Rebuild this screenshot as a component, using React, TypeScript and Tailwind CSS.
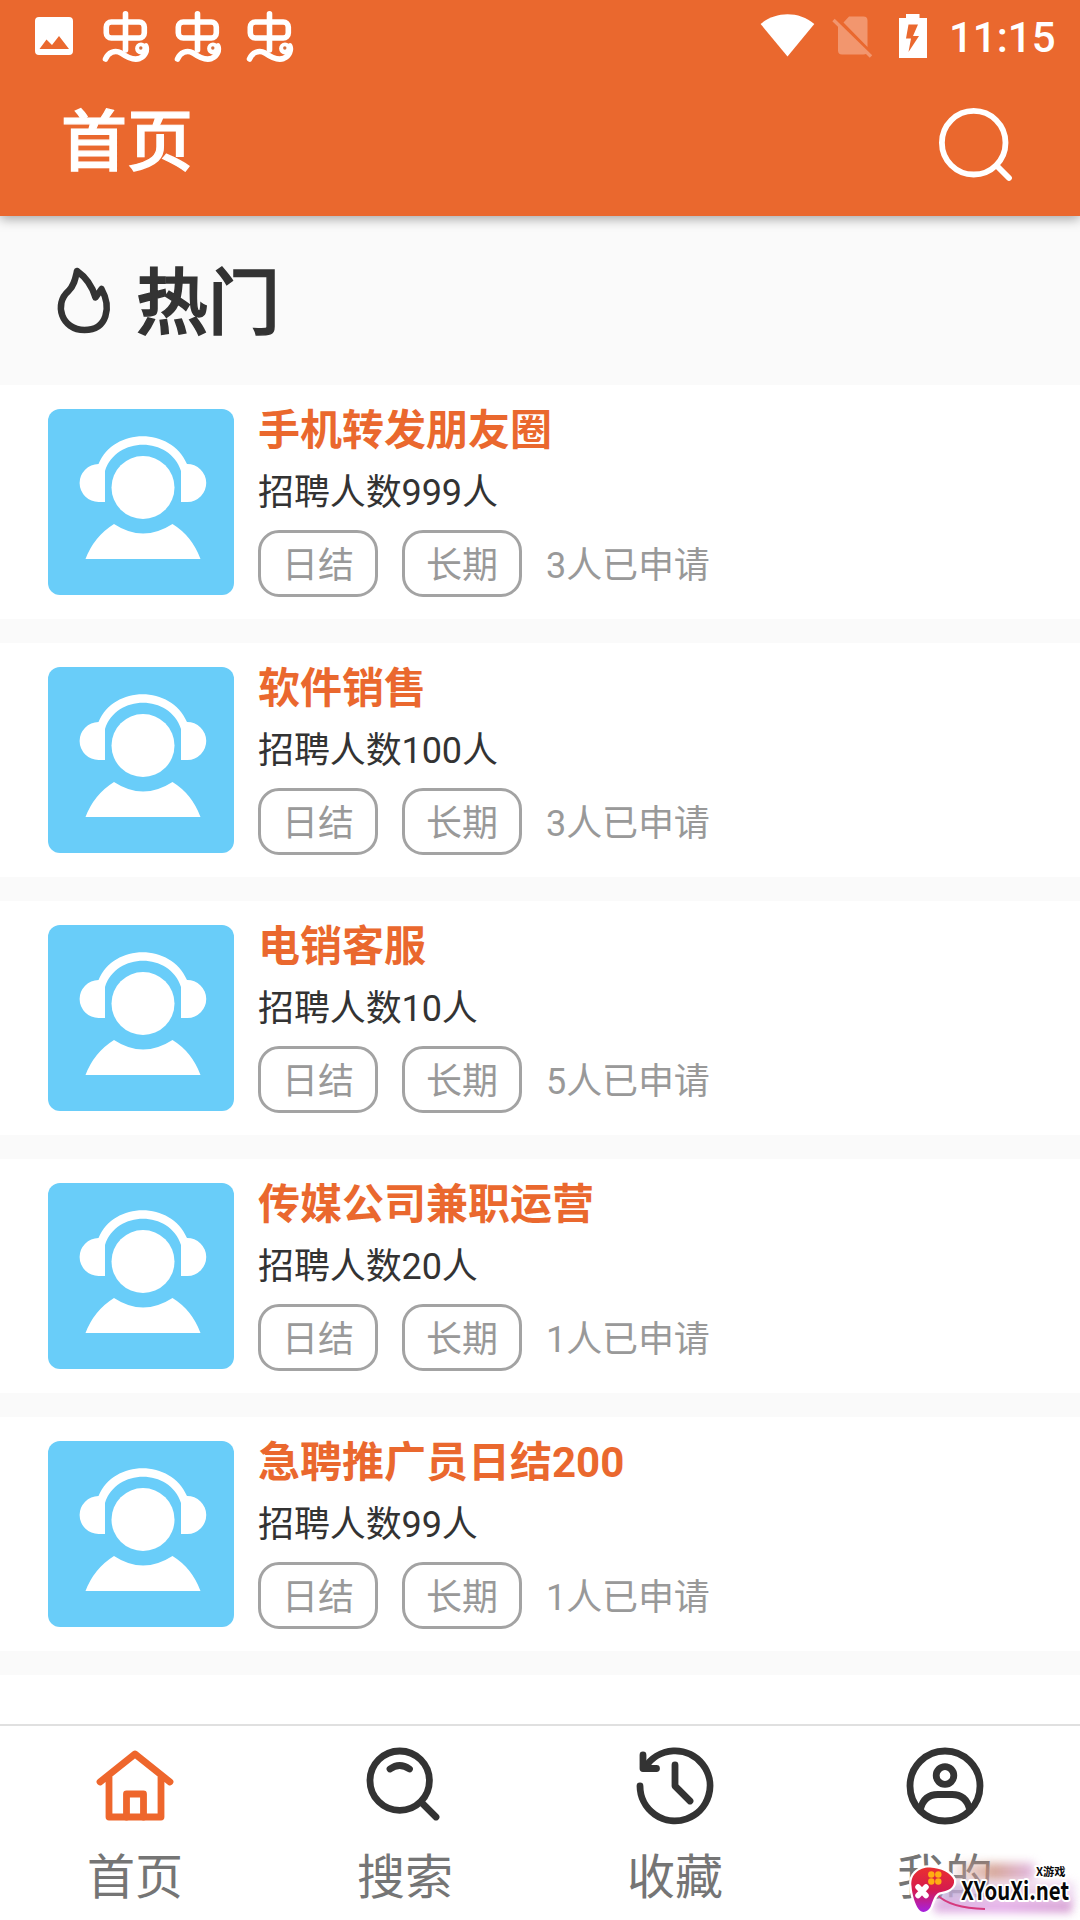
import React from "react";

const jobs = [
  { title: "手机转发朋友圈", count: 999, applied: 3 },
  { title: "软件销售", count: 100, applied: 3 },
  { title: "电销客服", count: 10, applied: 5 },
  { title: "传媒公司兼职运营", count: 20, applied: 1 },
  { title: "急聘推广员日结200", count: 99, applied: 1 },
];

function WormIcon() {
  return (
    <svg className="h-[72px] w-[72px] shrink-0" viewBox="0 0 72 72" fill="none" stroke="#fff" strokeWidth="5.6" strokeLinecap="round" strokeLinejoin="round">
      <rect x="16.3" y="22" width="38" height="16" rx="5" />
      <path d="M35.500 13.800V50" />
      <path d="M15.500 59C18 52.500 25 49.500 31 53C38 58 44 60.500 49.500 58.500C55.500 56 57.500 50 55.800 46" />
      <circle cx="51" cy="48.500" r="4.600" fill="#fff" strokeWidth="2.600" />
      <circle cx="50.800" cy="48" r="1.700" fill="#d4703f" stroke="none" />
    </svg>
  );
}

function StatusBar() {
  return (
    <div className="flex h-[72px] justify-between">
      <div className="flex pl-[18px]">
        <svg className="h-[72px] w-[72px] shrink-0" viewBox="18 0 72 72">
          <path fill="#fff" fillRule="evenodd" d="M39 17H69a4 4 0 0 1 4 4V51a4 4 0 0 1-4 4H39a4 4 0 0 1-4-4V21a4 4 0 0 1 4-4ZM39.500 49H69L59 36L52 45L46.500 39.500Z" />
        </svg>
        <WormIcon />
        <WormIcon />
        <WormIcon />
      </div>
      <div className="flex">
        <svg className="h-[72px] w-[180px]" viewBox="755 0 180 72">
          <path fill="#fff" d="M760.600 24C776 11 799 11 814.300 24L787.500 56.500Z" />
          <path fill="#f2966e" d="M849 16.500H863.500Q867.500 16.500 867.500 20.500V47L843.500 22.500ZM838 24.500L866.500 53.500Q865.500 54.500 863.500 54.500H842Q838 54.500 838 50.500Z" />
          <path stroke="#f2966e" strokeWidth="3.400" d="M833.500 20L871 56.500" />
          <path fill="#fff" fillRule="evenodd" d="M906 14H919.500V18H927V58H899V18H906ZM908.500 24.500L906 38.500H911L908.500 52L919 36H913L918 24.500Z" />
        </svg>
        <span className="w-[145px] pl-[14px] font-[Roboto] text-[42px] font-medium leading-[75px] text-white">11:15</span>
      </div>
    </div>
  );
}

function Avatar() {
  return (
    <svg className="h-[186px] w-[186px] shrink-0" viewBox="48 409 186 186">
      <rect x="48" y="409" width="186" height="186" rx="12" fill="#69cdf9" />
      <g fill="#fff">
        <circle cx="143" cy="487.500" r="31.500" />
        <path d="M85.500 559Q94 536.500 114 524Q143 543 172.500 524Q192 536 200.500 559Z" />
        <path d="M98.500 464C114 427 171 427 187 464A19 19 0 0 1 187.500 502H181V471C170 436 116 436 105 471V502H98.700A19 19 0 0 1 98.500 464Z" />
      </g>
    </svg>
  );
}

function Tag({ children }: { children: React.ReactNode }) {
  return (
    <span className="flex h-[67px] w-[120px] items-center justify-center rounded-[21px] border-[3px] border-[#a3a3a3] pt-[5px] text-[36px] leading-none text-[#999]">
      {children}
    </span>
  );
}

function JobCard({ title, count, applied }: { title: string; count: number; applied: number }) {
  return (
    <article className="flex h-[234px] gap-6 bg-white pl-12 pt-6">
      <Avatar />
      <div>
        <h2 className="h-[56px] pt-px text-[42px] font-bold leading-[42px] text-[#ea682e]">{title}</h2>
        <p className="h-[65px] pt-px text-[36px] leading-[54px] tracking-[-0.12px] text-[#333]">招聘人数{count}人</p>
        <div className="flex items-center gap-6">
          <Tag>日结</Tag>
          <Tag>长期</Tag>
          <span className="pt-[5px] text-[36px] leading-none tracking-[-0.1px] text-[#999]">{applied}人已申请</span>
        </div>
      </div>
    </article>
  );
}

const navItems = [
  {
    label: "首页",
    color: "text-[#ee662c]",
    icon: (
      <>
        <path d="M6 38L41 10L76 38M15 33V73H67V33" />
        <path d="M32.500 73V50H49.500V73" />
      </>
    ),
  },
  {
    label: "搜索",
    color: "text-[#333]",
    icon: (
      <>
        <circle cx="35.700" cy="36.700" r="29.700" />
        <path d="M58 59L72 73M26 25Q35.500 18 45.500 25" />
      </>
    ),
  },
  {
    label: "收藏",
    color: "text-[#333]",
    icon: (
      <>
        <path d="M6 42A35 35 0 1 0 11.500 23" />
        <path d="M9 11V24.500H22.500M41 21V42L56 57" />
      </>
    ),
  },
  {
    label: "我的",
    color: "text-[#333]",
    icon: (
      <>
        <circle cx="41" cy="42" r="35" />
        <circle cx="41" cy="31.500" r="8.800" />
        <path d="M16.500 65Q20 50.500 34 50.500H48Q62 50.500 65.500 65" />
      </>
    ),
  },
];

function Watermark() {
  return (
    <div className="absolute bottom-0 right-0 h-[72px] w-[176px] overflow-hidden">
      <div className="absolute left-[50px] top-[15px] h-[18px] w-[80px] bg-linear-to-r from-[#e3b9b4]/40 via-[#c98a78] to-[#d9a0d8] opacity-75 blur-[5px]" />
      <div className="absolute left-[36px] top-[34px] h-[22px] w-[134px] bg-linear-to-r from-[#b9a6d6] via-[#e8c3dc] to-[#e9cfee] opacity-80 blur-[5px]" />
      <div className="absolute left-[30px] top-[52px] h-[13px] w-[138px] bg-linear-to-r from-[#d9a3dc] via-[#e0a0e6] to-[#cf8fcb] opacity-80 blur-[4px]" />
      <svg className="absolute inset-0 h-[72px] w-[176px]" viewBox="904 1848 176 72">
        <defs>
          <linearGradient id="pad" x1="0" y1="0" x2="0" y2="1">
            <stop offset="0" stopColor="#ea2f30" />
            <stop offset=".5" stopColor="#d51b4e" />
            <stop offset="1" stopColor="#a621e0" />
          </linearGradient>
        </defs>
        <path d="M936.700 1894.500Q950 1908 985 1909" fill="none" stroke="#d53a7e" strokeWidth="1.800" />
        <path d="M911.500 1886C910 1874 920 1867 930 1867.500C941 1868 951 1873 954 1880C955 1888 948 1891 939 1892.500C934 1895 933 1901 930.500 1907C928 1912 922 1914 918.500 1909C915 1904 912 1894 911.500 1886Z" fill="url(#pad)" stroke="#fff" strokeWidth="4.500" paintOrder="stroke" />
        <path d="M918 1887L926 1895.500M926 1887L918 1895.500" stroke="#fff" strokeWidth="5.500" strokeLinecap="round" />
        <g fill="#ffae12">
          <circle cx="931.300" cy="1874.500" r="3.200" />
          <circle cx="938.300" cy="1874.500" r="3.200" />
          <circle cx="931.300" cy="1881.500" r="3.200" />
          <circle cx="938.300" cy="1881.500" r="3.200" />
        </g>
        <g fill="#080808" stroke="#fff" strokeWidth="4" paintOrder="stroke" strokeLinejoin="round">
          <text x="1036" y="1876" fontSize="11" fontWeight="700" textLength="29.500" lengthAdjust="spacingAndGlyphs" fontFamily="Noto Sans CJK SC">X游戏</text>
          <text x="961" y="1900" fontSize="25" fontWeight="700" textLength="108" lengthAdjust="spacingAndGlyphs" fontFamily="Noto Sans CJK SC">XYouXi.net</text>
        </g>
      </svg>
    </div>
  );
}

export default function App() {
  return (
    <div className="relative flex h-[1920px] w-[1080px] flex-col overflow-hidden bg-[#fafafa] font-[Roboto,'Noto_Sans_CJK_SC',sans-serif]">
      <header className="relative h-[216px] shrink-0 bg-[#ea682e] shadow-[0_3px_11px_rgba(0,0,0,0.34)]">
        <StatusBar />
        <div className="flex h-[144px] items-start justify-between pl-[61px] pr-[66px]">
          <h1 className="pt-[38px] text-[66px] font-medium leading-[66px] text-white [-webkit-text-stroke:1.2px_#fff]">首页</h1>
          <svg className="mt-[33px] h-[78px] w-[78px]" viewBox="936 105 78 78" fill="none" stroke="#fff" strokeWidth="5.800" strokeLinecap="round">
            <circle cx="973.700" cy="142.700" r="31.800" />
            <path d="M998 167L1009 178" />
          </svg>
        </div>
      </header>
      <section className="flex h-[169px] shrink-0 items-start pl-[54px]">
        <svg className="mt-[46px] h-[80px] w-[60px]" viewBox="53.500 261 60 80" fill="none" stroke="#333" strokeWidth="6.500" strokeLinejoin="round">
          <path d="M76.500 270C85 276 92 286 95 296.500L101 288C111 306 107 329 84 329C61 329 53 303 68 290C74 284 75 277 76.500 270Z" />
        </svg>
        <h2 className="ml-[22px] mt-[50px] text-[72px] font-medium leading-[76px] text-[#333] [-webkit-text-stroke:1.5px_#333]">热门</h2>
      </section>
      <main className="flex shrink-0 flex-col gap-6">
        {jobs.map((job) => (
          <JobCard key={job.title} {...job} />
        ))}
        <div className="h-[49px] bg-white" />
      </main>
      <nav className="grid min-h-0 flex-1 grid-cols-4 border-t-2 border-[#e0e0e0] bg-white">
        {navItems.map((item) => (
          <a key={item.label} className="flex flex-col items-center pt-[18px]">
            <svg className={`h-[84px] w-[82px] ${item.color}`} viewBox="0 0 82 84" fill="none" stroke="currentColor" strokeWidth="6.800" strokeLinecap="round" strokeLinejoin="round">
              {item.icon}
            </svg>
            <span className="mt-[22px] text-[48px] leading-[56px] text-[#757575]">{item.label}</span>
          </a>
        ))}
      </nav>
      <Watermark />
    </div>
  );
}
